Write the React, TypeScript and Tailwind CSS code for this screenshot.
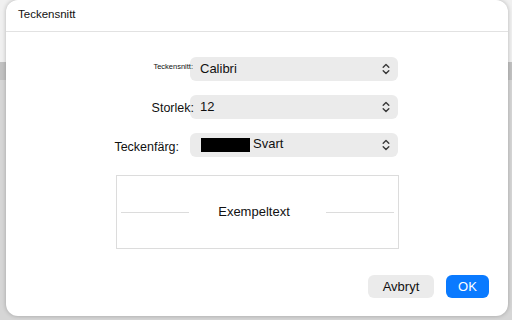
import React from "react";

const Chevrons = () => (
  <svg width="8" height="12" viewBox="0 0 8 12" fill="none" stroke="#3a3a3a" strokeWidth="1.4" strokeLinecap="round" strokeLinejoin="round">
    <path d="M1.2 4.2 L4 1.4 L6.8 4.2" />
    <path d="M1.2 7.8 L4 10.6 L6.8 7.8" />
  </svg>
);

function Select({ children }: { children: React.ReactNode }) {
  return (
    <div className="flex h-[24px] w-[208px] items-center justify-between rounded-[6px] bg-[#ebebeb] pl-[10px] pr-[8px]">
      <div className="flex items-center text-[13px] text-[#111]">{children}</div>
      <Chevrons />
    </div>
  );
}

export default function App() {
  return (
    <div
      className="relative h-[320px] w-[512px] overflow-hidden bg-[#d6d6d6]"
      style={{ fontFamily: '"Liberation Sans", Arial, sans-serif' }}
    >
      <div className="absolute left-0 top-0 h-[62px] w-full bg-[#f0f0f0]" />
      <div className="absolute left-0 top-[62px] h-[18px] w-full bg-[#c2c2c2]" />
      <div className="relative ml-[6px] flex h-[316px] w-[502px] flex-col rounded-[12px] bg-white shadow-[0_0_4px_rgba(0,0,0,0.25)]">
        <div className="flex h-[32px] items-center border-b border-[#e2e2e2] px-[12px] pb-[1px]">
          <span className="text-[11.5px] text-[#111]">Teckensnitt</span>
        </div>
        <div className="flex flex-col gap-[14px] pt-[25px]">
          <div className="flex items-start">
            <div className="relative z-10 mr-[-3px] w-[187px] pt-[5px] text-right text-[7.5px] leading-[9px] text-[#111]">
              Teckensnitt:
            </div>
            <Select>Calibri</Select>
          </div>
          <div className="flex items-center">
            <div className="relative z-10 mr-[-4px] w-[188px] pt-[2px] text-right text-[12.5px] text-[#111]">
              Storlek:
            </div>
            <Select>12</Select>
          </div>
          <div className="flex items-center">
            <div className="w-[173px] pt-[5px] text-right text-[12.5px] text-[#111]">Teckenfärg:</div>
            <div className="ml-[11px]">
              <Select>
                <span className="ml-[1px] mr-[3px] inline-block h-[14px] w-[49px] bg-black" />
                <span className="pb-[2px]">Svart</span>
              </Select>
            </div>
          </div>
        </div>
        <div className="ml-[110px] mt-[18px] flex h-[74px] w-[283px] items-center border border-[#dcdcdc] px-[4px]">
          <div className="h-px w-[68px] bg-[#dcdcdc]" />
          <div className="flex-1 pr-[7px] text-center text-[13px] text-[#111]">Exempeltext</div>
          <div className="h-px w-[68px] bg-[#dcdcdc]" />
        </div>
        <div className="mt-[26px] flex justify-end gap-[12px] pr-[19px]">
          <button className="h-[23px] w-[66px] rounded-[6px] bg-[#ebebeb] text-[13px] text-[#111]">Avbryt</button>
          <button className="h-[23px] w-[43px] rounded-[6px] bg-[#0a7aff] text-[13px] text-white">OK</button>
        </div>
      </div>
    </div>
  );
}
